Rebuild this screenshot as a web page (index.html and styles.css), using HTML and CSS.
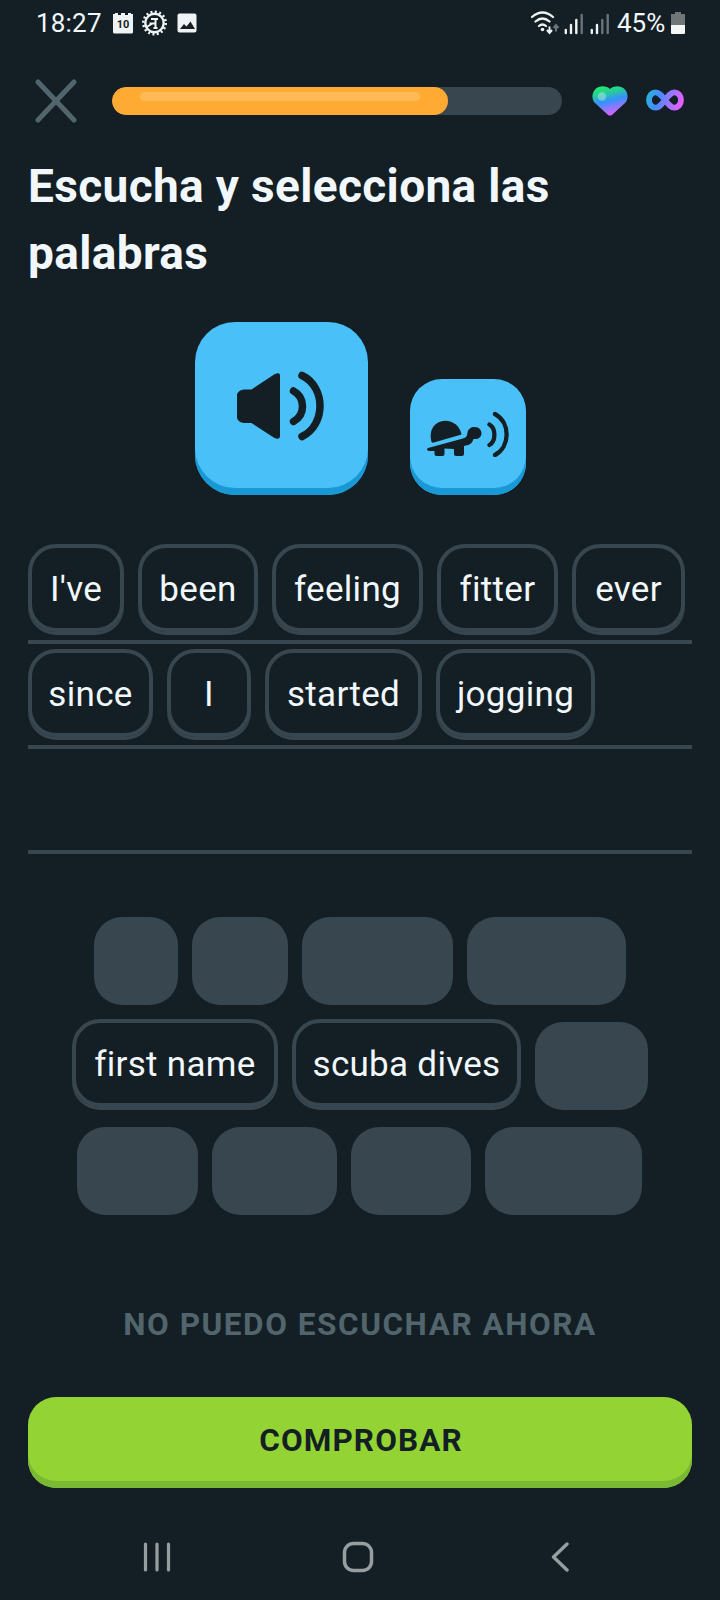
FILE: index.html
```html
<!DOCTYPE html>
<html lang="es">
<head>
<meta charset="utf-8">
<title>Escucha y selecciona las palabras</title>
<link rel="stylesheet" href="styles.css">
</head>
<body>
<div class="screen">
  <header class="status">
    <span class="clock">18:27</span>
    <svg class="status-left" width="86" height="28" viewBox="0 0 86 28">
      <path d="M1 5h2V4h3v2h3V4h4v2h3V4h3v1h2v18a1.500 1.500 0 0 1-1.500 1.500h-17A1.500 1.500 0 0 1 1 23z" fill="#f0f3f4"/>
      <text class="cal-day" x="11" y="19" text-anchor="middle">10</text>
      <circle cx="42.500" cy="14" r="9.200" fill="none" stroke="#f0f3f4" stroke-width="2.400"/>
      <circle cx="42.500" cy="14" r="11.200" fill="none" stroke="#f0f3f4" stroke-width="2.600" stroke-dasharray="2 2.398"/>
      <path d="M39 10h7M43.500 10v9M41.500 19h4M34.500 18l6-3.500M37.500 14.500h6" fill="none" stroke="#f0f3f4" stroke-width="2"/>
      <rect x="65.500" y="4.500" width="19" height="19" rx="2" fill="#f0f3f4"/>
      <path d="M68 20l4-5 2.500 2.500 4-5 4.500 7.500z" fill="#151f24"/>
    </svg>
    <svg class="status-right" width="80" height="28" viewBox="0 0 80 28" fill="none">
      <g stroke="#f0f3f4" stroke-width="2.300" stroke-linecap="round">
        <path d="M2 8q10.500-9 21 0M5.500 12.500q7-6 14 0M9 17q3.500-3 7 0"/>
      </g>
      <circle cx="12.500" cy="20.500" r="1.800" fill="#f0f3f4"/>
      <path d="M19.500 17.500v6M17 21l2.500 3 2.500-3" stroke="#f0f3f4" stroke-width="2"/>
      <path d="M26 22.500v-6M23.500 19l2.500-3 2.500 3" stroke="#68747a" stroke-width="2"/>
      <g stroke="#f0f3f4" stroke-width="2.400" stroke-linecap="round">
        <path d="M35.800 21v3M41 16v8M46.300 11v13M61.800 21v3M67 16v8"/>
        <path d="M51.700 6v18M72.300 11v13M77.700 6v18" stroke="#68747a"/>
      </g>
    </svg>
    <span class="percent">45%</span>
    <svg class="battery" width="14" height="22" viewBox="0 0 14 22">
      <path d="M4 0h6v2h4v11H0V2h4z" fill="#707678"/>
      <path d="M0 13h14v8a1 1 0 0 1-1 1H1a1 1 0 0 1-1-1z" fill="#f4f6f6"/>
    </svg>
  </header>

  <div class="lesson-bar">
    <svg class="close" width="42" height="44" viewBox="0 0 42 44">
      <path d="M3 3l36 38M39 3L3 41" stroke="#52656d" stroke-width="5" stroke-linecap="round"/>
    </svg>
    <div class="progress"><div class="progress-fill" style="width:336px"><div class="progress-shine"></div></div></div>
    <svg class="heart" width="36" height="30" viewBox="0 0 36 30">
      <defs>
        <linearGradient id="heartFill" x1=".3" y1="0" x2=".6" y2="1">
          <stop offset="0" stop-color="#20e86e"/><stop offset=".22" stop-color="#28cf96"/>
          <stop offset=".5" stop-color="#3592fb"/><stop offset=".68" stop-color="#7680ff"/><stop offset="1" stop-color="#ef59ff"/>
        </linearGradient>
      </defs>
      <path d="M18 3C14.500-.5 7.500-1 3.500 3S-.5 13.500 3 17l12.800 11.700q2.200 1.800 4.400 0L33 17c3.500-3.500 3.500-10-.5-14S21.500-.5 18 3z" fill="url(#heartFill)"/>
      <circle cx="10" cy="10.500" r="4.200" fill="#fff" opacity=".32"/>
    </svg>
    <svg class="infinity" width="38" height="22" viewBox="0 0 38 22">
      <defs>
        <linearGradient id="loopFill" gradientUnits="userSpaceOnUse" x1="0" y1="2" x2="38" y2="15">
          <stop offset="0" stop-color="#26b6d5"/><stop offset=".35" stop-color="#438cff"/>
          <stop offset=".6" stop-color="#9278ff"/><stop offset="1" stop-color="#f45aff"/>
        </linearGradient>
      </defs>
      <path d="M19 11C15.500 6.500 13 3.300 9.600 3.300S3 6.500 3 11s3.200 7.700 6.600 7.700S15.500 15.500 19 11s6-7.700 9.400-7.700S35 6.500 35 11s-3.200 7.700-6.600 7.700S22.500 15.500 19 11z" fill="none" stroke="url(#loopFill)" stroke-width="5.800"/>
    </svg>
  </div>

  <h1 class="title">Escucha y selecciona las palabras</h1>

  <div class="audio">
    <div class="audio-btn audio-large">
      <svg width="90" height="70" viewBox="0 0 90 70">
        <path d="M7 18.500h7.500L37.500 3.300Q43 .5 43 4.500v60Q43 69.500 37.500 67L14.500 52H7q-7.500-1-7.500-8V26.500q0-7 7.500-8z" fill="#131f24"/>
        <path d="M56.500 20c12 6.500 12 24 0 30.500M65 4.500c24 11.500 24 49.500 0 61" fill="none" stroke="#131f24" stroke-width="7.500" stroke-linecap="round"/>
      </svg>
    </div>
    <div class="audio-btn audio-small">
      <svg width="84" height="46" viewBox="0 0 84 46">
        <g fill="#131f24">
          <path d="M5.500 31C2 18 10 10 19 9.800c8.500 0 15 5.700 16.500 13.700L7 31.800z"/>
          <path d="M2 37l35-9.500c3.500-1 4-2.500 4.500-6C42 18 45 16 48.500 16c4.500 0 7 3 7 6.200 0 4-3.500 6.500-8 5.800-1.500 5-4.500 6-9.500 7v8q0 2-2 2h-6q-2 0-2-2v-5l-9.500-.5v5.500q0 2-2 2h-6q-2 0-2-2v-3H3q-3.500-1-1-3z"/>
        </g>
        <path d="M63.500 13.500c6.500 4 6.500 16.500 0 20.500M69 3c15.500 8.500 15.500 32.500 0 41" fill="none" stroke="#131f24" stroke-width="4.300" stroke-linecap="round"/>
      </svg>
    </div>
  </div>

  <div class="answer">
    <div class="answer-row">
      <span class="chip" style="width:96px">I've</span>
      <span class="chip" style="width:120px">been</span>
      <span class="chip" style="width:151px">feeling</span>
      <span class="chip" style="width:121px">fitter</span>
      <span class="chip" style="width:113px">ever</span>
    </div>
    <div class="answer-row">
      <span class="chip" style="width:125px">since</span>
      <span class="chip" style="width:84px">I</span>
      <span class="chip" style="width:157px">started</span>
      <span class="chip" style="width:159px">jogging</span>
    </div>
    <div class="answer-row"></div>
  </div>

  <div class="bank">
    <div class="bank-row">
      <span class="slot" style="width:84px"></span>
      <span class="slot" style="width:96px"></span>
      <span class="slot" style="width:151px"></span>
      <span class="slot" style="width:159px"></span>
    </div>
    <div class="bank-row">
      <span class="chip" style="width:206px">first name</span>
      <span class="chip" style="width:229px">scuba dives</span>
      <span class="slot" style="width:113px"></span>
    </div>
    <div class="bank-row bank-row-last">
      <span class="slot" style="width:121px"></span>
      <span class="slot" style="width:125px"></span>
      <span class="slot" style="width:120px"></span>
      <span class="slot" style="width:157px"></span>
    </div>
  </div>

  <div class="skip">NO PUEDO ESCUCHAR AHORA</div>
  <div class="check">COMPROBAR</div>

  <nav class="nav">
    <svg width="28" height="30" viewBox="0 0 28 30"><path d="M2.500 2v26M14 2v26M25.500 2v26" stroke="#979ea2" stroke-width="3.200" stroke-linecap="round"/></svg>
    <svg class="home" width="32" height="32" viewBox="0 0 32 32"><rect x="2.500" y="2.500" width="27" height="27" rx="9" fill="none" stroke="#979ea2" stroke-width="3.500"/></svg>
    <svg width="20" height="30" viewBox="0 0 20 30"><path d="M17 2L3.500 15 17 28" fill="none" stroke="#979ea2" stroke-width="3.400" stroke-linecap="round" stroke-linejoin="round"/></svg>
  </nav>
</div>
</body>
</html>
```
FILE: styles.css
```css
* { box-sizing: border-box; }
body { margin: 0; background: #131f24; }
svg { display: block; flex: none; }

.screen {
  width: 720px;
  height: 1600px;
  overflow: hidden;
  display: flex;
  flex-direction: column;
  background: #131f24;
  color: #f1f7fb;
  font-family: Roboto, "Liberation Sans", sans-serif;
}

/* Status bar */
.status { display: flex; align-items: center; height: 46px; padding: 0 35px 0 36px; font-size: 26px; }
.clock { width: 76px; letter-spacing: .2px; }
.status-left { width: 86px; }
.status-right { margin-left: auto; }
.cal-day { font: 700 11px Roboto, sans-serif; fill: #131f24; }
.percent { margin-left: 7px; width: 53px; white-space: nowrap; letter-spacing: 0; }
.battery { margin-left: 1px; }

/* Lesson progress */
.lesson-bar { display: flex; align-items: center; height: 44px; margin-top: 33px; padding-left: 35px; }
.progress { width: 450px; height: 28px; margin-left: 35px; border-radius: 14px; background: #37464f; overflow: hidden; }
.progress-fill { height: 28px; padding: 5px 28px; border-radius: 14px; background: #ffab33; }
.progress-shine { height: 9px; border-radius: 5px; background: #ffb957; }
.heart { margin-left: 30px; }
.infinity { margin: -2px 0 0 18px; }

.title { margin: 30px 28px 0; width: 600px; font-size: 46px; line-height: 67px; font-weight: 700; letter-spacing: .35px; }

/* Listening buttons */
.audio { display: flex; justify-content: center; align-items: flex-end; gap: 42px; height: 173px; margin-top: 35px; padding-left: 1px; }
.audio-btn { display: flex; align-items: center; justify-content: center; background: #49c0f8; box-shadow: inset 0 -7px #1899d6; }
.audio-large { width: 173px; height: 173px; border-radius: 40px; padding-bottom: 5px; padding-left: 1px; }
.audio-small { width: 116px; height: 116px; border-radius: 32px; padding-bottom: 6px; padding-right: 1px; }

/* Word chips */
.chip {
  display: flex;
  align-items: center;
  justify-content: center;
  flex: none;
  height: 88px;
  padding-top: 2px;
  border: 4px solid #37464f;
  border-radius: 28px;
  box-shadow: 0 3px #37464f;
  font-size: 35px;
  letter-spacing: .3px;
  white-space: nowrap;
}
.slot { flex: none; height: 88px; border-radius: 28px; background: #37464f; }

.answer { margin: 44px 28px 0; }
.answer-row { display: flex; gap: 14px; height: 105px; padding-top: 5px; border-bottom: 4px solid #37464f; }
.bank { display: flex; flex-direction: column; gap: 14px; margin-top: 60px; }
.bank-row { display: flex; justify-content: center; align-items: flex-start; gap: 14px; height: 91px; }
.bank-row .slot { margin-top: 3px; }
.bank-row-last { padding-right: 1px; }

/* Footer */
.skip { margin-top: 89px; height: 42px; line-height: 42px; text-align: center; font-size: 31.500px; font-weight: 700; letter-spacing: 1.550px; color: #52656d; }
.check {
  display: flex;
  align-items: center;
  justify-content: center;
  height: 91px;
  margin: 51px 28px 0;
  padding-bottom: 4px;
  padding-left: 2px;
  border-radius: 28px;
  background: #93d333;
  box-shadow: inset 0 -7px #79b933;
  color: #131f24;
  font-size: 31.500px;
  font-weight: 700;
  letter-spacing: 1.100px;
}
.nav { display: flex; align-items: center; justify-content: space-between; height: 32px; margin-top: 53px; padding: 0 150px 0 143px; }
.home { margin-right: 6px; }
```
